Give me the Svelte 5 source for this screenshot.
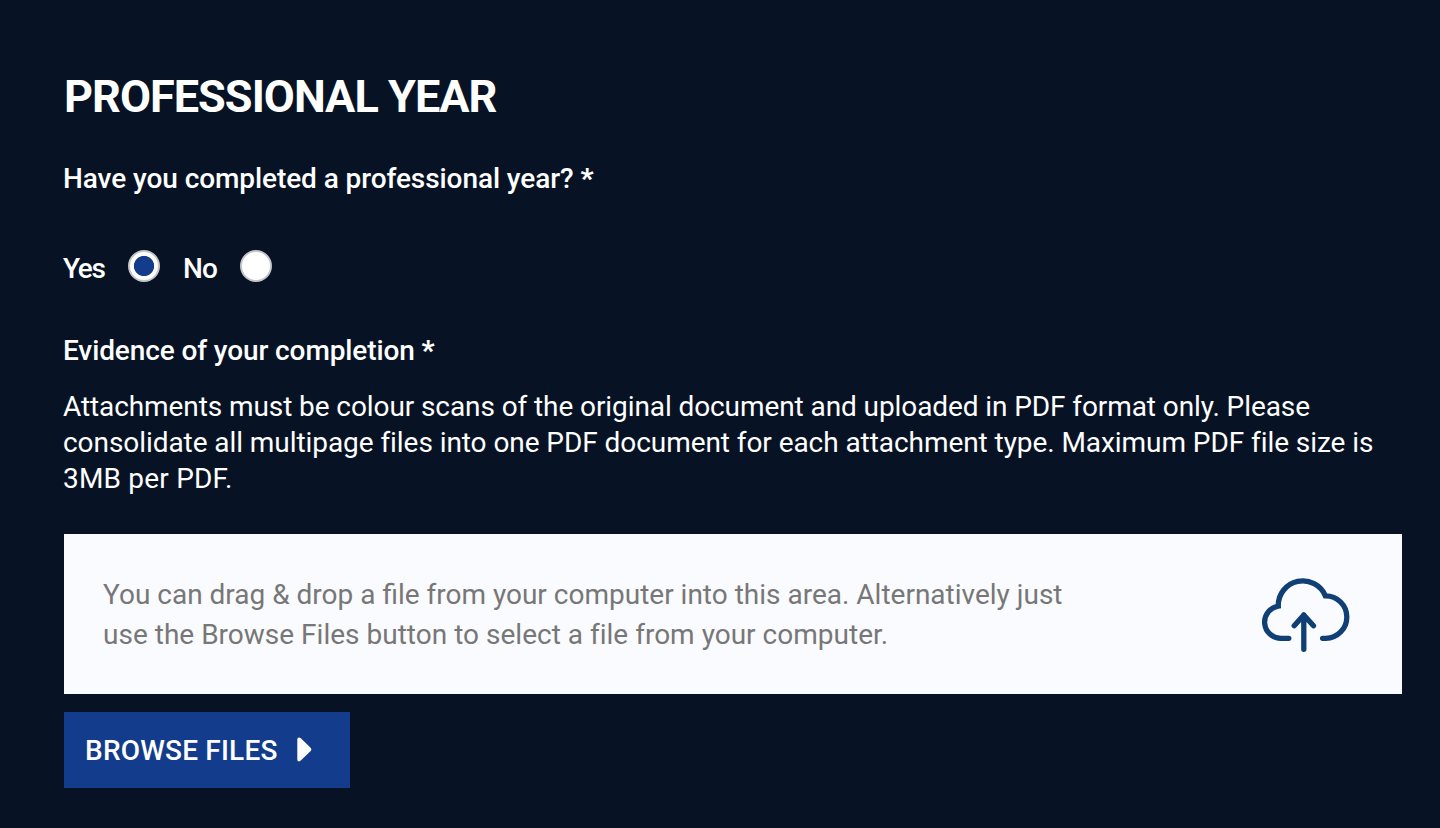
<script>
  let completed = $state('yes');
</script>

<main>
  <h1>PROFESSIONAL YEAR</h1>
  <p class="label question">Have you completed a professional year? <b>*</b></p>

  <div class="options">
    <label class="yes"><span>Yes</span><input type="radio" name="completed" value="yes" bind:group={completed} /></label>
    <label class="no"><span>No</span><input type="radio" name="completed" value="no" bind:group={completed} /></label>
  </div>

  <p class="label evidence">Evidence of your completion <b>*</b></p>
  <p class="help">
    <span class="l1">Attachments must be colour scans of the original document and uploaded in PDF format only. Please</span>
    <span class="l2">consolidate all multipage files into one PDF document for each attachment type. Maximum PDF file size is</span>
    <span class="l3">3MB per PDF.</span>
  </p>

  <div class="drop">
    <p>
      <span class="d1">You can drag &amp; drop a file from your computer into this area. Alternatively just</span>
      <span class="d2">use the Browse Files button to select a file from your computer.</span>
    </p>
    <svg width="120" height="100" viewBox="0 0 120 100" fill="none" stroke="#0f3f75" stroke-width="5.3" stroke-linecap="round" aria-hidden="true">
      <path d="M38.8 73.3H31A16.2 16.2 0 0 1 28.3 41.1A24.5 24.5 0 0 1 75.4 30.9A21.2 21.2 0 0 1 75.8 73.3H72.6" />
      <path d="M53.8 84.3V50M44.2 60.7L53.8 49.9L63.5 60.7" stroke-linejoin="round" />
    </svg>
  </div>

  <button type="button">
    <span>BROWSE FILES</span>
    <svg width="15" height="25" viewBox="0 0 15 25" aria-hidden="true">
      <path d="M.3 2.4Q.3.4 2 .4Q3 .4 3.8 1.2L13.4 10.6Q15.2 12.4 13.4 14.2L3.8 23.6Q3 24.4 2 24.4Q.3 24.4.3 22.4Z" fill="#fff" />
    </svg>
  </button>
</main>

<style>
  :global(body) { margin: 0; background: #071324; }
  main {
    box-sizing: border-box;
    width: 1440px;
    height: 828px;
    padding: 70px 38px 0 64px;
    overflow: hidden;
    background: #071324;
    color: #fff;
    font: 400 28px/36px Roboto, sans-serif;
  }
  h1, p { margin: 0; }
  h1 { font-size: 45px; line-height: 54px; font-weight: 700; letter-spacing: -0.95px; }
  .label { margin-left: -1px; font-weight: 500; }
  b { font-weight: 900; }
  .question { margin-top: 37px; letter-spacing: -0.08px; }
  .options { display: flex; margin: 53px 0 0 -1px; height: 36px; font-weight: 500; }
  label { display: flex; align-items: flex-start; }
  .yes { width: 120px; }
  label span { width: 65px; margin-top: 1px; }
  .yes span { letter-spacing: -1.4px; }
  .no span { width: 57px; letter-spacing: -0.9px; }
  input {
    appearance: none;
    box-sizing: border-box;
    width: 32px;
    height: 32px;
    margin: 0;
    border: 2px solid #c6c6c9;
    border-radius: 50%;
    background: #fff;
  }
  input:checked { background: radial-gradient(circle, #143c8c 9.7px, #fff 10.5px); }
  .evidence { margin-top: 47px; letter-spacing: -0.11px; }
  .help { margin: 20px 0 0 -1px; }
  p span { display: block; white-space: nowrap; }
  .l1 { letter-spacing: -0.09px; }
  .l2 { letter-spacing: -0.065px; }
  .l3 { letter-spacing: 0.2px; }
  .drop {
    box-sizing: border-box;
    display: flex;
    justify-content: space-between;
    align-items: center;
    height: 160px;
    margin-top: 37px;
    padding: 0 32px 0 39px;
    background: #fafbfe;
    color: #777;
    line-height: 40px;
  }
  .drop p, .drop svg { margin-top: 2px; }
  .d1 { letter-spacing: 0; }
  .d2 { letter-spacing: 0.01px; }
  button {
    display: flex;
    align-items: center;
    box-sizing: border-box;
    width: 286px;
    height: 76px;
    margin-top: 18px;
    padding: 0 0 0 21px;
    border: 0;
    background: #143c8c;
    color: #fff;
    font: 500 28px/36px Roboto, sans-serif;
    letter-spacing: 0.2px;
  }
  button span { width: 212px; margin-top: 2px; text-align: left; }
  button svg { margin-top: -1px; }
</style>
